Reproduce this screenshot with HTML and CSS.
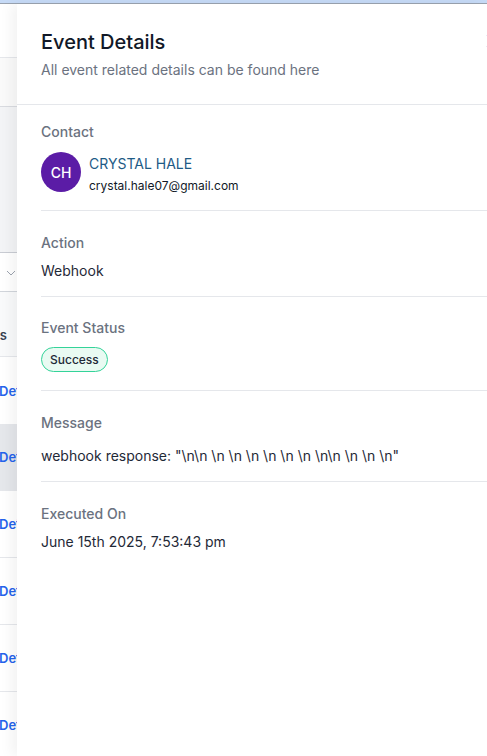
FILE: index.html
```html
<!DOCTYPE html>
<html>
<head>
<meta charset="utf-8">
<link rel="stylesheet" href="styles.css">
</head>
<body>
<div class="topbar"></div>
<div class="main">
  <div class="backdrop">
    <div class="brow r1"></div>
    <div class="brow r2"></div>
    <div class="brow r3"></div>
    <div class="brow r4"><svg class="chev" width="10" height="6" viewBox="0 0 10 6"><path d="M1 1l4 4 4-4" fill="none" stroke="#9ca3af" stroke-width="1"/></svg></div>
    <div class="brow r5"><span class="hd">Actions</span></div>
    <div class="brow r6"><span class="lnk">Details</span></div>
    <div class="brow r7"><span class="lnk">Details</span></div>
    <div class="brow r8"><span class="lnk">Details</span></div>
    <div class="brow r8"><span class="lnk">Details</span></div>
    <div class="brow r8"><span class="lnk">Details</span></div>
    <div class="brow r8"><span class="lnk">Details</span></div>
  </div>
  <div class="panel">
    <div class="header">
      <div>
        <h1 class="title">Event Details</h1>
        <p class="subtitle">All event related details can be found here</p>
      </div>
      <button class="close"><svg width="14" height="14" viewBox="0 0 14 14"><path d="M1 1l12 12M13 1L1 13" stroke="#a5a3d6" stroke-width="1.5"/></svg></button>
    </div>
    <div class="section s-contact">
      <div class="label">Contact</div>
      <div class="contact">
        <div class="avatar">CH</div>
        <div class="who">
          <div class="name">CRYSTAL HALE</div>
          <div class="email">crystal.hale07@gmail.com</div>
        </div>
      </div>
    </div>
    <div class="section s-action">
      <div class="label">Action</div>
      <div class="value">Webhook</div>
    </div>
    <div class="section s-status">
      <div class="label">Event Status</div>
      <div><span class="badge">Success</span></div>
    </div>
    <div class="section s-msg">
      <div class="label">Message</div>
      <div class="value">webhook response: "\n\n \n \n \n \n \n \n \n\n \n \n \n"</div>
    </div>
    <div class="section s-exec">
      <div class="label">Executed On</div>
      <div class="value">June 15th 2025, 7:53:43 pm</div>
    </div>
  </div>
</div>
</body>
</html>
```

FILE: styles.css
```css
* { box-sizing: border-box; }
html, body { margin: 0; padding: 0; height: 100%; overflow: hidden; }
body {
  font-family: Inter, "Noto Sans", sans-serif;
  background: #fff;
  color: #1f2937;
}
.topbar {
  height: 4px;
  background: #c6daf6;
  border-bottom: 1px solid #9aa3b0;
}
.main {
  display: flex;
  height: calc(100% - 4px);
}
.backdrop {
  width: 17px;
  flex: none;
  overflow: hidden;
  display: flex;
  flex-direction: column;
}
.brow {
  flex: none;
  border-bottom: 1px solid #e5e7eb;
  display: flex;
  align-items: center;
  white-space: nowrap;
  overflow: hidden;
  font-size: 13px;
}
.r1 { height: 54px; background: #fff; }
.r2 { height: 49px; background: #fafafa; border-bottom-color: #d9dbe0; }
.r3 { height: 146px; background: #f3f4f6; border-bottom-color: #c9ccd3; }
.r4 { height: 39px; background: #fff; justify-content: flex-end; padding-right: 1px; border-bottom-color: #d1d5db; }
.r5 { height: 65px; background: #f9fafb; align-items: flex-end; padding-bottom: 13px; }
.r6 { height: 67px; background: #fff; border-bottom: none; }
.r7 { height: 67px; background: #e5e7eb; }
.r8 { height: 67px; background: #fff; }
.chev { display: block; margin-top: 2px; }
.hd { margin-left: -41px; font-weight: 600; color: #374151; }
.lnk { margin-left: -1px; color: #2563eb; font-weight: 600; }
.panel {
  flex: 1;
  position: relative;
  z-index: 1;
  background: #fff;
  box-shadow: -6px 0 12px rgba(0, 0, 0, 0.05);
  overflow: hidden;
}
.header {
  display: flex;
  justify-content: space-between;
  align-items: flex-start;
  padding: 24px 0 24px 24px;
  border-bottom: 1px solid #e5e7eb;
}
.title {
  margin: 0;
  font-size: 20px;
  line-height: 28px;
  font-weight: 500;
  color: #111827;
}
.subtitle {
  margin: 4px 0 0;
  font-size: 14px;
  line-height: 20px;
  color: #6b7280;
}
.close {
  border: none;
  background: none;
  padding: 0;
  margin: 6px -13px 0 0;
  display: block;
}
.close svg { display: block; }
.section {
  margin-left: 24px;
  border-bottom: 1px solid #e5e7eb;
}
.label {
  font-size: 14px;
  line-height: 20px;
  font-weight: 500;
  color: #6b7280;
}
.value {
  font-size: 14px;
  line-height: 20px;
  color: #1f2937;
}
.s-contact { padding: 17px 0 15px; }
.s-action { padding: 22px 0 15px; }
.s-action .value { margin-top: 8px; }
.s-status { padding: 21px 0 18px; }
.s-status .label { margin-bottom: 9px; }
.s-msg { padding: 22px 0 15px; }
.s-msg .value { margin-top: 13px; }
.s-exec { padding: 22px 0 0; border-bottom: none; }
.s-exec .value { margin-top: 8px; }
.contact {
  display: flex;
  align-items: flex-start;
  gap: 8px;
  margin-top: 10px;
}
.avatar {
  width: 40px;
  height: 40px;
  border-radius: 50%;
  background: #5b1ca6;
  color: #fff;
  font-size: 14px;
  font-weight: 500;
  display: flex;
  align-items: center;
  justify-content: center;
  flex: none;
}
.who { display: flex; flex-direction: column; margin-top: 2px; }
.name { font-size: 14px; line-height: 20px; color: #1e5b86; }
.email { font-size: 12px; line-height: 18px; margin-top: 3px; color: #111827; }
.badge {
  display: inline-block;
  height: 25px;
  line-height: 23px;
  padding: 0 8px;
  border: 1px solid #34d399;
  border-radius: 999px;
  background: #e9faf2;
  font-size: 12px;
  font-weight: 500;
  color: #1f2937;
}
```
